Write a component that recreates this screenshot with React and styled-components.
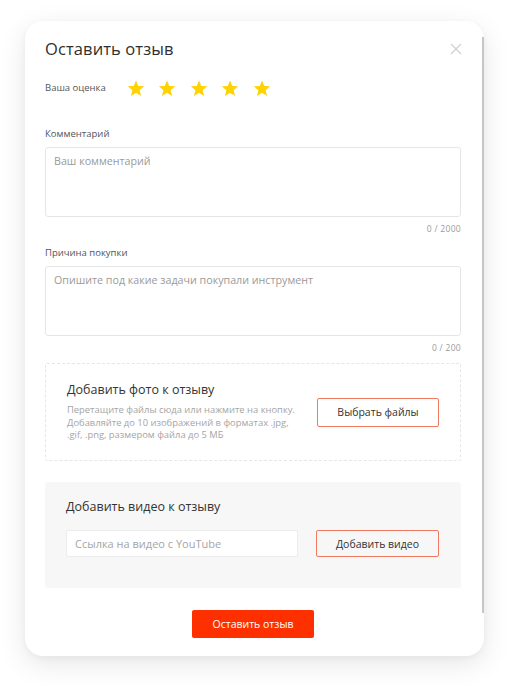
import React from "react";
import styled, { createGlobalStyle } from "styled-components";

const Global = createGlobalStyle`
  html, body { margin: 0; padding: 0; background: #ffffff; }
  body { font-family: "Open Sans", "Noto Sans", sans-serif; color: #333; }
  * { box-sizing: border-box; }
`;

const Page = styled.div`
  width: 511px;
  height: 685px;
  padding: 21px 27px 0 25px;
`;

const Card = styled.div`
  position: relative;
  width: 459px;
  background: #fff;
  border-radius: 18px;
  box-shadow: 0 8px 28px rgba(0, 0, 0, 0.1), 0 2px 6px rgba(0, 0, 0, 0.04);
  padding: 18px 23px 18px 20px;
  display: flex;
  flex-direction: column;
`;

const Scroll = styled.div`
  position: absolute;
  right: 0;
  top: 16px;
  bottom: 43px;
  width: 2px;
  background: #c6c6c6;
`;

const Header = styled.div`
  display: flex;
  justify-content: space-between;
  align-items: center;
  height: 20px;
`;

const Title = styled.h2`
  margin: 0;
  font-size: 16.5px;
  font-weight: 400;
  color: #2f2f2f;
  line-height: 20px;
  letter-spacing: 0.1px;
`;

const Close = styled.button`
  border: 0;
  background: none;
  padding: 0;
  width: 12px;
  height: 12px;
  margin-right: -1px;
  cursor: pointer;
  display: flex;
`;

const RatingRow = styled.div`
  display: flex;
  align-items: center;
  height: 20px;
  margin-top: 19px;
`;

const SmallLabel = styled.div`
  font-size: 9.5px;
  line-height: 14px;
  color: #555;
  margin-top: ${(p) => p.$mt || 0}px;
`;

const Stars = styled.div`
  display: flex;
  gap: 13.5px;
  margin-left: 21px;
`;

const Field = styled.div`
  height: 70px;
  border: 1px solid #e6e6e6;
  border-radius: 3px;
  margin-top: 6px;
  padding: 5px 8px;
  font-size: 10.7px;
  color: #9a9a9a;
  line-height: 16px;
`;

const Counter = styled.div`
  text-align: right;
  font-size: 8.5px;
  color: #9a9a9a;
  line-height: 12px;
  margin-top: 6px;
  letter-spacing: 0.3px;
`;

const PhotoBox = styled.div`
  margin-top: 9px;
  height: 98px;
  border: 1px dashed #e6e6e6;
  border-radius: 2px;
  display: flex;
  align-items: center;
  justify-content: space-between;
  padding: 0 21px 0 21px;
`;

const BoxTitle = styled.div`
  font-size: 12.5px;
  font-weight: 500;
  color: #333;
  line-height: 16px;
`;

const Desc = styled.div`
  margin-top: 6px;
  font-size: 9.4px;
  line-height: 12.5px;
  color: #a5a5a5;
`;

const OutlineButton = styled.button`
  width: ${(p) => p.$w}px;
  height: ${(p) => p.$h}px;
  border: 1px solid #f07a60;
  border-radius: 2px;
  background: ${(p) => p.$bg || "#fff"};
  font-family: inherit;
  font-size: 10.5px;
  color: #333;
  padding: 0;
  cursor: pointer;
`;

const VideoBox = styled.div`
  margin-top: 21px;
  height: 106px;
  background: #f7f7f7;
  border-radius: 3px;
  padding: 17px 21px 0 21px;
`;

const VideoRow = styled.div`
  display: flex;
  gap: 18px;
  margin-top: 15px;
`;

const LinkInput = styled.div`
  width: 232px;
  height: 27px;
  background: #fff;
  border: 1px solid #ececec;
  border-radius: 2px;
  font-size: 11px;
  color: #a5a5a5;
  display: flex;
  align-items: center;
  padding: 0 8px;
`;

const Submit = styled.button`
  align-self: center;
  margin-top: 22px;
  width: 122px;
  height: 28px;
  border: 0;
  border-radius: 2px;
  background: #ff3000;
  color: #fff;
  font-family: inherit;
  font-size: 10.5px;
  font-weight: 500;
  cursor: pointer;
`;

const Star = () => (
  <svg width="18" height="17" viewBox="0 0 24 23">
    <polygon
      points="12,0.8 15.1,8.1 23,8.6 16.9,13.7 18.9,21.5 12,17.2 5.1,21.5 7.1,13.7 1,8.6 8.9,8.1"
      fill="#ffd200"
    />
  </svg>
);

export default function App() {
  return (
    <>
      <Global />
      <Page>
        <Card>
          <Scroll />
          <Header>
            <Title>Оставить отзыв</Title>
            <Close aria-label="Закрыть">
              <svg width="12" height="12" viewBox="0 0 12 12">
                <path d="M1 1L11 11M11 1L1 11" stroke="#d0d0d0" strokeWidth="1.2" />
              </svg>
            </Close>
          </Header>
          <RatingRow>
            <SmallLabel>Ваша оценка</SmallLabel>
            <Stars>
              {[0, 1, 2, 3, 4].map((i) => (
                <Star key={i} />
              ))}
            </Stars>
          </RatingRow>
          <SmallLabel $mt={29}>Комментарий</SmallLabel>
          <Field>Ваш комментарий</Field>
          <Counter>0 / 2000</Counter>
          <SmallLabel $mt={11}>Причина покупки</SmallLabel>
          <Field>Опишите под какие задачи покупали инструмент</Field>
          <Counter>0 / 200</Counter>
          <PhotoBox>
            <div>
              <BoxTitle>Добавить фото к отзыву</BoxTitle>
              <Desc>
                Перетащите файлы сюда или нажмите на кнопку.
                <br />
                Добавляйте до 10 изображений в форматах .jpg,
                <br />
                .gif, .png, размером файла до 5 МБ
              </Desc>
            </div>
            <OutlineButton $w={122} $h={29}>Выбрать файлы</OutlineButton>
          </PhotoBox>
          <VideoBox>
            <BoxTitle>Добавить видео к отзыву</BoxTitle>
            <VideoRow>
              <LinkInput>Ссылка на видео с YouTube</LinkInput>
              <OutlineButton $w={123} $h={27} $bg="#f7f7f7">Добавить видео</OutlineButton>
            </VideoRow>
          </VideoBox>
          <Submit>Оставить отзыв</Submit>
        </Card>
      </Page>
    </>
  );
}
